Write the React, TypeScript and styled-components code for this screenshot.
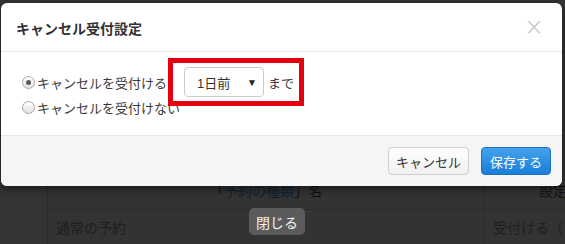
import React from "react";
import styled, { createGlobalStyle } from "styled-components";

const Global = createGlobalStyle`
  html, body { margin: 0; padding: 0; }
  body {
    width: 565px;
    height: 244px;
    overflow: hidden;
    background: #333333;
    font-family: "Liberation Sans", "Noto Sans CJK JP", sans-serif;
  }
`;

const Screen = styled.div`
  position: relative;
  width: 565px;
  height: 244px;
  background: #333333;
  overflow: hidden;
`;

/* ---------- dimmed page behind the dialog ---------- */
const Page = styled.div`
  display: grid;
  grid-template-columns: 48px 1fr;
  height: 100%;
`;

const SideGutter = styled.div`
  background: #323436;
  border-right: 1px solid #2a2a2a;
`;

const Table = styled.div`
  display: grid;
  grid-template-columns: 437px 1fr;
  grid-template-rows: 210px 1fr;
`;

const Cell = styled.div<{ $head?: boolean; $center?: boolean; $right?: boolean; $indent?: number }>`
  display: flex;
  align-items: ${(p) => (p.$head ? "flex-end" : "center")};
  justify-content: ${(p) => (p.$center ? "center" : "flex-start")};
  padding: ${(p) => (p.$head ? "0 8px 9px" : "0 8px")};
  padding-left: ${(p) => p.$indent ?? 8}px;
  border-right: ${(p) => (p.$right ? "none" : "1px solid #2b2b2b")};
  border-bottom: ${(p) => (p.$head ? "1px solid #2b2b2b" : "none")};
  font-size: 14px;
  color: ${(p) => (p.$head ? "#111111" : "#1e1e1e")};
  white-space: nowrap;
  overflow: hidden;
`;

const LinkText = styled.span`
  color: #0f2233;
`;

const CloseFloat = styled.div`
  position: absolute;
  left: 249px;
  top: 208px;
  width: 56px;
  height: 27px;
  border-radius: 5px;
  background: #5b5b5b;
  color: #f2f2f2;
  font-size: 14px;
  display: flex;
  align-items: center;
  justify-content: center;
`;

/* ---------- dialog ---------- */
const Dialog = styled.div`
  position: absolute;
  left: 1px;
  top: 3px;
  width: 561px;
  height: 183px;
  background: #ffffff;
  border-radius: 6px;
  box-shadow: 0 3px 9px rgba(0, 0, 0, 0.5);
  overflow: hidden;
  display: flex;
  flex-direction: column;
`;

const Header = styled.div`
  height: 49px;
  box-sizing: border-box;
  border-bottom: 1px solid #e5e5e5;
  padding: 0 18px 0 15px;
  display: flex;
  align-items: center;
  justify-content: space-between;
`;

const Title = styled.div`
  font-size: 14px;
  font-weight: bold;
  color: #333333;
  padding-top: 1px;
`;

const CloseX = styled.div`
  font-size: 24px;
  line-height: 1;
  color: #c4c4c4;
  font-family: "DejaVu Sans", sans-serif;
  font-weight: 300;
`;

const Body = styled.div`
  height: 83px;
  box-sizing: border-box;
  padding: 15px 0 0 21px;
  display: flex;
  flex-direction: column;
`;

const OptionRow = styled.div<{ $tall?: boolean }>`
  display: flex;
  align-items: center;
  height: ${(p) => (p.$tall ? "30px" : "20px")};
  font-size: 13px;
  color: #3a3a3a;
`;

const Radio = styled.span<{ $checked?: boolean }>`
  width: 11px;
  height: 11px;
  border-radius: 50%;
  border: 1px solid #a8a8a8;
  background: linear-gradient(#ffffff, #e2e2e2);
  margin-right: 2px;
  display: inline-flex;
  align-items: center;
  justify-content: center;
  flex-shrink: 0;
  &::after {
    content: "";
    width: 5px;
    height: 5px;
    border-radius: 50%;
    background: ${(p) => (p.$checked ? "#5a5a5a" : "transparent")};
  }
`;

const Select = styled.div`
  margin-left: 17px;
  width: 80px;
  height: 30px;
  box-sizing: border-box;
  border: 1px solid #cccccc;
  border-radius: 4px;
  background: #ffffff;
  display: flex;
  align-items: center;
  justify-content: space-between;
  padding: 0 6px 0 12px;
  font-size: 13px;
  color: #333333;
`;

const Caret = styled.span`
  font-size: 10px;
  color: #222222;
`;

const Suffix = styled.span`
  margin-left: 4px;
`;

const Highlight = styled.div`
  position: absolute;
  left: 167px;
  top: 55px;
  width: 136px;
  height: 48px;
  box-sizing: border-box;
  border: 5px solid #e5000f;
  pointer-events: none;
`;

const Footer = styled.div`
  flex: 1;
  border-top: 1px solid #e5e5e5;
  background: #f5f5f5;
  display: flex;
  justify-content: flex-end;
  align-items: flex-start;
  gap: 12px;
  padding: 11px 11px 0 0;
`;

const Button = styled.button<{ $primary?: boolean }>`
  height: 28px;
  box-sizing: border-box;
  border-radius: 4px;
  font-family: inherit;
  font-size: 13px;
  padding: 0 ${(p) => (p.$primary ? "8px" : "7px")};
  min-width: ${(p) => (p.$primary ? "68px" : "80px")};
  border: 1px solid ${(p) => (p.$primary ? "#1f6fbf" : "#cfcfcf")};
  color: ${(p) => (p.$primary ? "#ffffff" : "#333333")};
  background: ${(p) =>
    p.$primary
      ? "linear-gradient(#44a2ee, #1a7ed8)"
      : "linear-gradient(#ffffff, #f0f0f0)"};
  display: flex;
  align-items: center;
  justify-content: center;
`;

export default function App() {
  return (
    <>
      <Global />
      <Screen>
        <Page>
          <SideGutter />
          <Table>
            <Cell $head $center>
              「<LinkText>予約の種類</LinkText>」名
            </Cell>
            <Cell $head $right $indent={54}>
              設定
            </Cell>
            <Cell>通常の予約</Cell>
            <Cell $right>受付ける（</Cell>
          </Table>
        </Page>
        <CloseFloat>閉じる</CloseFloat>

        <Dialog>
          <Header>
            <Title>キャンセル受付設定</Title>
            <CloseX>×</CloseX>
          </Header>
          <Body>
            <OptionRow $tall>
              <Radio $checked />
              キャンセルを受付ける
              <Select>
                1日前
                <Caret>▼</Caret>
              </Select>
              <Suffix>まで</Suffix>
            </OptionRow>
            <OptionRow>
              <Radio />
              キャンセルを受付けない
            </OptionRow>
          </Body>
          <Footer>
            <Button>キャンセル</Button>
            <Button $primary>保存する</Button>
          </Footer>
          <Highlight />
        </Dialog>
      </Screen>
    </>
  );
}
